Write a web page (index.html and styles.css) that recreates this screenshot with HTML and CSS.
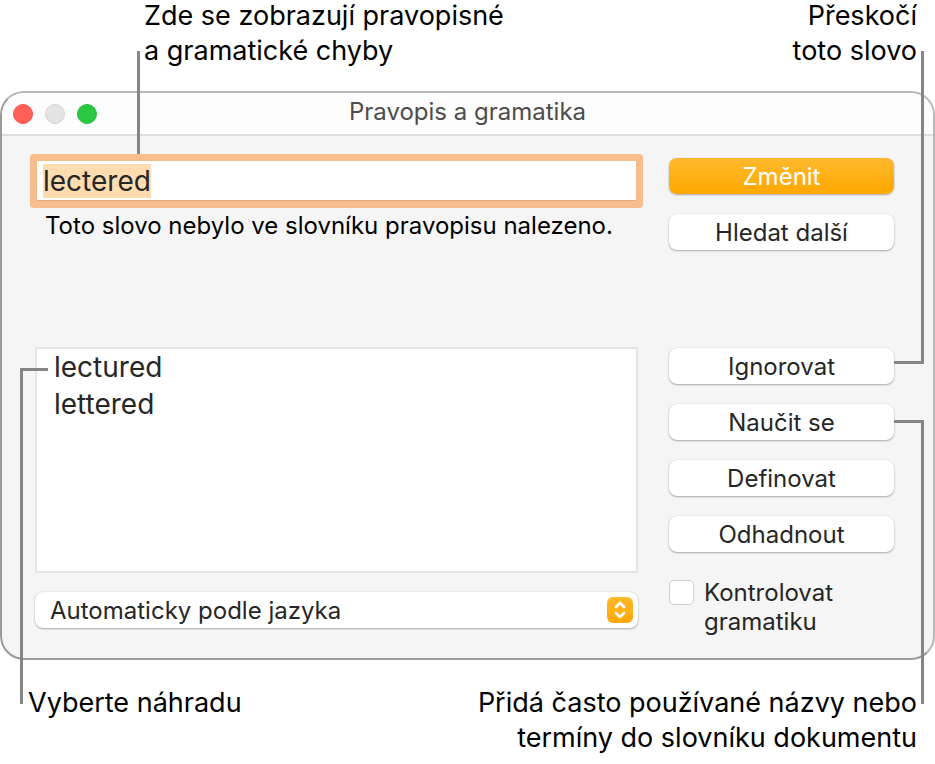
FILE: index.html
```
<!DOCTYPE html>
<html lang="cs">
<head>
    <meta charset="UTF-8">
    <meta name="viewport" content="width=device-width, initial-scale=1.0">
    <title>Pravopis a gramatika</title>
    <link rel="stylesheet" href="styles.css">
</head>
<body>
    <div class="figure">
        <div class="callouts">
            <p class="callout callout-error">Zde se zobrazují pravopisné<br>a gramatické chyby<span class="line"></span></p>
            <p class="callout callout-skip">Přeskočí<br>toto slovo<span class="line"></span></p>
        </div>

        <div class="window">
            <div class="titlebar">
                <div class="lights">
                    <span class="light red"></span>
                    <span class="light gray"></span>
                    <span class="light green"></span>
                </div>
                <h1>Pravopis a gramatika</h1>
            </div>
            <div class="content">
                <div class="left">
                    <input type="text" id="word" class="word" value="lectered" aria-label="Chyba" spellcheck="false" autofocus>
                    <p class="message">Toto slovo nebylo ve slovníku pravopisu nalezeno.</p>
                    <select class="guesses" size="6" aria-label="Náhrady">
                        <option>lectured</option>
                        <option>lettered</option>
                    </select>
                    <div class="language">
                        <select aria-label="Jazyk">
                            <option>Automaticky podle jazyka</option>
                        </select>
                        <svg class="arrows" viewBox="0 0 26 26" fill="none" stroke="#fff" stroke-width="2.6" stroke-linecap="round" stroke-linejoin="round">
                            <path d="M9 10l4-4 4 4M9 16l4 4 4-4"/>
                        </svg>
                    </div>
                </div>
                <div class="right">
                    <button type="button" class="primary">Změnit</button>
                    <button type="button">Hledat další</button>
                    <div class="group">
                        <button type="button">Ignorovat</button>
                        <button type="button">Naučit se</button>
                        <button type="button">Definovat</button>
                        <button type="button">Odhadnout</button>
                    </div>
                    <div class="check">
                        <input type="checkbox" id="grammar">
                        <label for="grammar">Kontrolovat gramatiku</label>
                    </div>
                </div>
            </div>
        </div>

        <div class="callouts">
            <p class="callout callout-replace">Vyberte náhradu<span class="line"></span></p>
            <p class="callout callout-learn">Přidá často používané názvy nebo<br>termíny do slovníku dokumentu<span class="line"></span></p>
        </div>
    </div>
<script>
    const word = document.querySelector('#word');
    word.focus();
    word.select();
</script>
</body>
</html>
```
FILE: styles.css
```
*{
    box-sizing: border-box;
}
body{
    margin: 0;
    background-color: #fff;
    font-family: Inter, "Liberation Sans", sans-serif;
    color: #000;
}
p, h1{
    margin: 0;
}
.figure{
    margin-top: -2px;
}
.callouts{
    display: flex;
    justify-content: space-between;
    align-items: flex-start;
    padding: 0 18px 0 28px;
}
.callout{
    position: relative;
    z-index: 1;
    font-size: 27px;
    line-height: 35px;
    white-space: nowrap;
}
.callout-error{
    margin-left: 116px;
}
.callout-skip,
.callout-learn{
    text-align: right;
}

/* leader lines run over the window */
.line{
    position: absolute;
    border: 0 solid #858585;
    pointer-events: none;
}
.callout-error .line{
    left: -7px;
    top: 53px;
    height: 103px;
    border-left-width: 3px;
}
.callout-skip .line{
    right: -7px;
    top: 53px;
    width: 30px;
    height: 313px;
    border-width: 0 3px 3px 0;
}
.callout-replace .line{
    left: -8px;
    bottom: 16px;
    width: 28px;
    height: 336px;
    border-width: 3px 0 0 3px;
}
.callout-learn .line{
    right: -7px;
    bottom: 51px;
    width: 30px;
    height: 284px;
    border-width: 3px 3px 0 0;
}

.window{
    margin: 23px 0 25px;
    border: 2px solid #999;
    border-top-color: #b8b8b8;
    border-right-color: #b8b8b8;
    border-radius: 24px;
    background-color: #f5f5f5;
    overflow: hidden;
}
.titlebar{
    display: grid;
    grid-template-columns: 1fr auto 1fr;
    align-items: center;
    height: 43px;
    padding: 0 11px;
    background-color: #fdfdfd;
    border-bottom: 2px solid #dedede;
}
.titlebar h1{
    font-size: 24px;
    font-weight: 400;
    line-height: 34px;
    padding-bottom: 4px;
    color: #4c4c4c;
}
.lights{
    display: flex;
    gap: 12px;
}
.light{
    width: 20px;
    height: 20px;
    border-radius: 50%;
    border: 1px solid #d2d2d2;
    background-color: #e3e3e3;
}
.red{
    background-color: #ff5f57;
    border-color: #f2564e;
}
.green{
    background-color: #28c840;
    border-color: #24bb3a;
}

.content{
    display: grid;
    grid-template-columns: 1fr 225px;
    gap: 31px;
    padding: 22px 39px 22px 33px;
}
.left{
    display: flex;
    flex-direction: column;
}
.word{
    height: 40px;
    margin: 3px 2px 0;
    padding: 0 6px;
    border: 0;
    outline: 0;
    background-color: #fff;
    box-shadow: 0 0 0 7px #f7bd8c, inset 0 -1px 0 #e0a878;
    border-radius: 1px;
    font: 28px/34px Inter, "Liberation Sans", sans-serif;
    color: #262626;
}
.word::selection{
    background-color: #ffdcb0;
    color: #262626;
}
.message{
    margin: 10px 0 0 10px;
    font-size: 24px;
    line-height: 30px;
    white-space: nowrap;
}
.guesses{
    height: 226px;
    margin-top: 106px;
    padding: 1px 0 0;
    border: 2px solid #e4e4e4;
    border-radius: 0;
    outline: 0;
    background-color: #fff;
    overflow: hidden;
    font: 28px Inter, "Liberation Sans", sans-serif;
    color: #262626;
}
.guesses option{
    padding: 0 17px;
    line-height: 37px;
    min-height: 37px;
}
.language{
    position: relative;
    margin-top: 19px;
}
.language select{
    display: block;
    width: 100%;
    height: 36px;
    padding: 0 15px;
    appearance: none;
    border: 0;
    border-radius: 8px;
    background-color: #fff;
    box-shadow: 0 1px 2px rgba(0,0,0,0.3), 0 0 1px rgba(0,0,0,0.2);
    font: 24px Inter, "Liberation Sans", sans-serif;
    color: #262626;
}
.arrows{
    position: absolute;
    right: 5px;
    top: 5px;
    width: 26px;
    height: 26px;
    border-radius: 6px;
    background: linear-gradient(#ffb92d, #ffa800);
    pointer-events: none;
}

.right{
    display: flex;
    flex-direction: column;
    gap: 20px;
}
.right button{
    height: 36px;
    padding: 0;
    border: 0;
    border-radius: 8px;
    background-color: #fff;
    box-shadow: 0 1px 2px rgba(0,0,0,0.3), 0 0 1px rgba(0,0,0,0.2);
    font: 24px Inter, "Liberation Sans", sans-serif;
    color: #262626;
}
.right .primary{
    background: linear-gradient(#ffb92d, #ffa800);
    color: #fff;
}
.group{
    display: flex;
    flex-direction: column;
    gap: 20px;
    margin-top: 78px;
}
.check{
    display: flex;
    gap: 10px;
    margin-top: 6px;
}
.check input{
    flex: none;
    width: 25px;
    height: 25px;
    margin: 2px 0 0;
    appearance: none;
    border: 1px solid #cfcfcf;
    border-radius: 5px;
    background-color: #fff;
}
.check label{
    font-size: 24px;
    line-height: 29px;
    color: #262626;
}
```
